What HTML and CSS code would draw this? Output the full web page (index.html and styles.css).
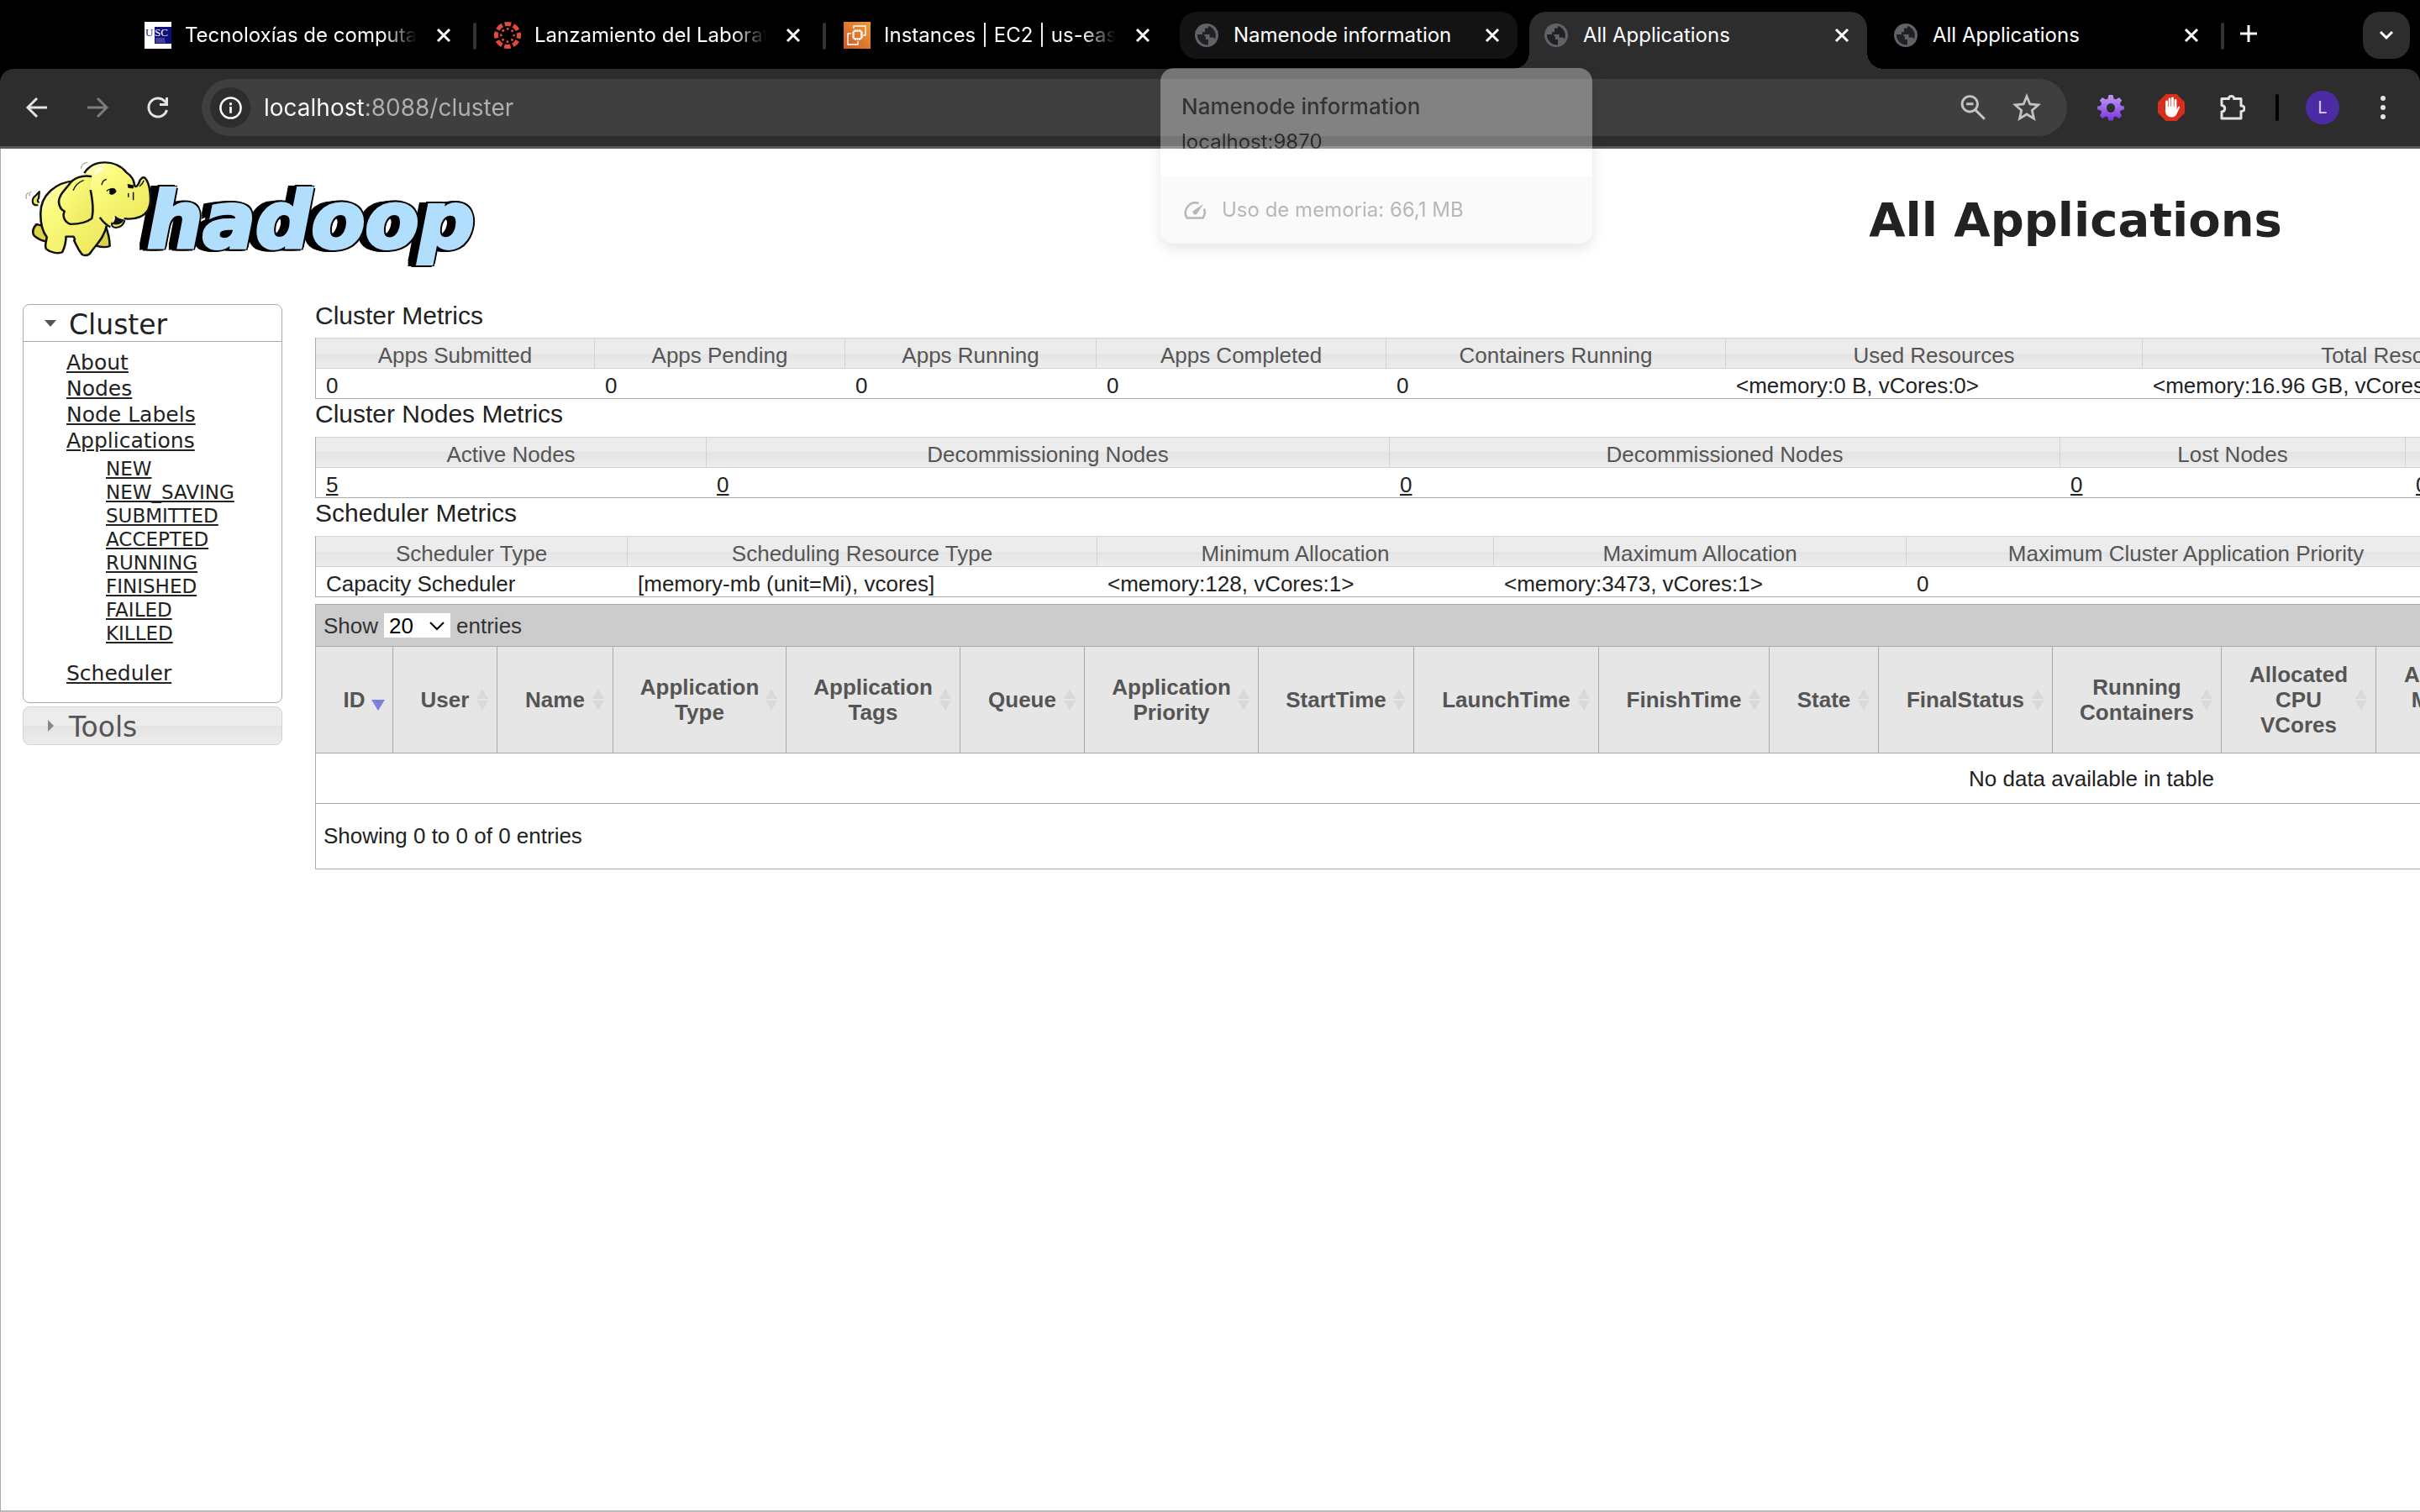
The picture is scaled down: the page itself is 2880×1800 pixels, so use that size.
FILE: index.html
```html
<!DOCTYPE html>
<html lang="es">
<head>
<meta charset="utf-8">
<title>All Applications</title>
<link rel="stylesheet" href="styles.css">
</head>
<body>
<svg class="defs" aria-hidden="true">
  <defs>
    <linearGradient id="gear-fill" x1="0" y1="0" x2="0" y2="1"><stop offset="0" stop-color="#c09af8"/><stop offset="1" stop-color="#7a35e0"/></linearGradient>
    <linearGradient id="aws-fill" x1="0" y1="1" x2="1" y2="0"><stop offset="0" stop-color="#c8592a"/><stop offset="1" stop-color="#f29b36"/></linearGradient>
    <linearGradient id="skin" x1="0" y1="0" x2="1" y2="1"><stop offset="0" stop-color="#fffdd0"/><stop offset=".3" stop-color="#fbfb7c"/><stop offset="1" stop-color="#eae65a"/></linearGradient>
    <symbol id="close" viewBox="0 0 18 18"><path d="M2 2l14 14M16 2L2 16" stroke="#fff" stroke-width="3" fill="none"/></symbol>
    <symbol id="globe" viewBox="0 0 28 28"><circle cx="14" cy="14" r="14" fill="#5f6368"/><path d="M3 13h6c2.200 0 4 1.800 4 4v2h3v6.500A12 12 0 0 1 3 13zM16 3v2.500h-4V10H9v3h8.500v3.500H21c1.500 0 2.500 1 3 2A11.500 11.500 0 0 0 16 3z" fill="#202124"/></symbol>
    <symbol id="sort" viewBox="0 0 16 26"><path d="M8 0l7 12H1zM8 26l7-12H1z" fill="#d9d9d9"/></symbol>
  </defs>
</svg>

<header class="browser">
  <div class="tabstrip">
    <div class="tabs" role="tablist">
      <div class="tab long" role="tab">
        <svg class="favicon" viewBox="0 0 32 32"><path fill="#fff" d="M0 0h32v32H0z"/><path fill="#10107a" d="M12 6h20v20H12z"/><text x="1" y="17" font-family="Liberation Serif" font-size="13" fill="#10107a">U</text><text x="12" y="17" font-family="Liberation Serif" font-size="13" fill="#fff">SC</text><path stroke="#7777b8" d="M13 20h11M13 22h11M13 24h12"/></svg>
        <span class="tab-title">Tecnoloxías de computación</span>
        <button class="tab-close" aria-label="Cerrar"><svg><use href="#close"/></svg></button>
      </div>
      <div class="tab long" role="tab">
        <svg class="favicon" viewBox="0 0 32 32"><circle cx="16" cy="16" r="13.500" fill="none" stroke="#e04c3c" stroke-width="5" stroke-dasharray="7.600 3" stroke-dashoffset="3.800"/><circle cx="16" cy="16" r="7.600" fill="none" stroke="#e04c3c" stroke-width="2.600" stroke-dasharray="2.600 3.370" stroke-dashoffset="1.300"/></svg>
        <span class="tab-title">Lanzamiento del Laboratorio</span>
        <button class="tab-close" aria-label="Cerrar"><svg><use href="#close"/></svg></button>
      </div>
      <div class="tab long" role="tab">
        <svg class="favicon" viewBox="0 0 32 32"><path fill="url(#aws-fill)" d="M0 0h32v32H0z"/><g fill="none" stroke="#fff" stroke-width="1.400"><path d="M12 11h9v9h-9zM14 11V9M16.500 11V9M19 11V9M14 22v-2M16.500 22v-2M19 22v-2M12 13h-2M12 15.500h-2M12 18h-2M21 13h2M21 15.500h2M21 18h2"/><path d="M12 8V5h14v11h-3M9 14H5v13h12v-4"/></g></svg>
        <span class="tab-title">Instances | EC2 | us-east-1</span>
        <button class="tab-close" aria-label="Cerrar"><svg><use href="#close"/></svg></button>
      </div>
      <div class="tab hovered" role="tab">
        <svg class="favicon small"><use href="#globe"/></svg>
        <span class="tab-title">Namenode information</span>
        <button class="tab-close" aria-label="Cerrar"><svg><use href="#close"/></svg></button>
      </div>
      <div class="tab active" role="tab" aria-selected="true">
        <svg class="favicon small"><use href="#globe"/></svg>
        <span class="tab-title">All Applications</span>
        <button class="tab-close" aria-label="Cerrar"><svg><use href="#close"/></svg></button>
      </div>
      <div class="tab" role="tab">
        <svg class="favicon small"><use href="#globe"/></svg>
        <span class="tab-title">All Applications</span>
        <button class="tab-close" aria-label="Cerrar"><svg><use href="#close"/></svg></button>
      </div>
    </div>
    <button class="new-tab" aria-label="Nueva pestaña"><svg viewBox="0 0 22 22"><path d="M11 1v20M1 11h20" stroke="#fff" stroke-width="3"/></svg></button>
    <button class="tab-search" aria-label="Buscar pestañas"><svg viewBox="0 0 18 12"><path d="M2 2l7 7 7-7" stroke="#fff" stroke-width="3" fill="none"/></svg></button>
  </div>

  <div class="toolbar">
    <button class="tool" aria-label="Atrás"><svg viewBox="0 0 32 32"><path d="M28 16H6M16 5L5 16l11 11" stroke="#e3e3e3" stroke-width="3" fill="none"/></svg></button>
    <button class="tool" aria-label="Adelante"><svg viewBox="0 0 32 32"><path d="M4 16h22M16 5l11 11-11 11" stroke="#7c7c7c" stroke-width="3" fill="none"/></svg></button>
    <button class="tool" aria-label="Recargar"><svg viewBox="0 0 32 32"><path d="M26.500 19A11 11 0 1 1 24 8.500l3 3" stroke="#e3e3e3" stroke-width="3" fill="none"/><path d="M28 4v10H18v-3h7V4z" fill="#e3e3e3"/></svg></button>
    <form class="omnibox">
      <button class="site-info" type="button" aria-label="Información del sitio"><svg viewBox="0 0 28 28"><circle cx="14" cy="14" r="12.500" stroke="#fff" stroke-width="2.600" fill="none"/><path d="M14 12.500v8M14 7.500v3" stroke="#fff" stroke-width="2.800"/></svg></button>
      <input class="url" type="text" aria-label="Dirección" value="localhost:8088/cluster">
      <button class="inner-tool" type="button" aria-label="Zoom"><svg viewBox="0 0 32 32"><circle cx="12.500" cy="12" r="8.600" stroke="#c4c4c4" stroke-width="2.800" fill="none"/><path d="M8.500 12h8M18.500 18.500L29 29" stroke="#c4c4c4" stroke-width="2.800"/></svg></button>
      <button class="inner-tool" type="button" aria-label="Marcador"><svg viewBox="0 0 32 32"><path d="M16 3.500l3.600 8.700 9.400.8-7.100 6.200 2.100 9.200L16 23.500l-8 4.900 2.100-9.200L3 13l9.400-.8z" stroke="#c4c4c4" stroke-width="2.600" fill="none"/></svg></button>
    </form>
    <button class="tool first" aria-label="Extensión"><svg viewBox="0 0 32 32"><g fill="url(#gear-fill)"><path fill-rule="evenodd" d="M13.500 1h5l1 4.500 2.500 1 4-2.500 3.200 3.500-2.400 3.800 1 2.500 4 .7v4l-4 1-1 2.500 2.400 3.800L26 29l-4-2.500-2.500 1-1 4h-5l-1-4-2.500-1L6 29l-3.200-3.200L5.200 22l-1-2.500-4-1v-4l4-.7 1-2.500L2.800 7.500 6 4l4 2.500 2.500-1zM16 11a5 5.500 0 1 0 0 11 5 5.500 0 1 0 0-11z"/></g></svg></button>
    <button class="tool" aria-label="AdBlock"><svg viewBox="0 0 32 32"><path d="M9.500 0h13L32 9.500v13L22.500 32h-13L0 22.500v-13z" fill="#d92d20"/><path d="M10.500 9v10M14 6v12M17.500 5v12M21 7.500v12" stroke="#fff" stroke-width="2.800" stroke-linecap="round"/><path d="M9.100 15h13.300v4l1.600-3.500c1-1.500 2.500-1 2 .7l-4 8.300c-1 2-3 3-5.500 3-4.500 0-7.400-3-7.400-7z" fill="#fff"/></svg></button>
    <button class="tool" aria-label="Extensiones"><svg viewBox="0 0 32 32"><path d="M4 5.500h8.500V4a3.500 3 0 0 1 6 0v1.500H27v8.500h1a3 3.200 0 0 1 0 6.500h-1V29H4v-8c5-.5 5-7 0-7.500z" stroke="#e3e3e3" stroke-width="3" stroke-linejoin="round" fill="none"/></svg></button>
    <span class="divider"></span>
    <button class="tool avatar-tool" aria-label="Perfil"><span class="avatar">L</span></button>
    <button class="tool" aria-label="Menú"><svg viewBox="0 0 32 32" fill="#e3e3e3"><circle cx="16" cy="5" r="3"/><circle cx="16" cy="16" r="3"/><circle cx="16" cy="27" r="3"/></svg></button>
  </div>

  <aside class="hovercard">
    <div class="hc-body">
      <div class="hc-title">Namenode information</div>
      <div class="hc-host">localhost:9870</div>
    </div>
    <div class="hc-foot">
      <svg viewBox="0 0 28 22"><path d="M18.500 3A12 12 0 0 0 4.500 20.500h19a12 12 0 0 0 1.500-11" fill="none" stroke="#333" stroke-width="2.500"/><path d="M24 4l-7.500 11.500a2.800 2.800 0 0 1-4.200-3.700z" fill="#333"/></svg>
      <span>Uso de memoria: 66,1 MB</span>
    </div>
  </aside>
</header>

<div class="page">
  <div class="page-head">
    <a class="logo" href="#" aria-label="hadoop">
      <svg class="elephant" viewBox="50 60 420 350" preserveAspectRatio="none" stroke="#111" stroke-width="7" stroke-linejoin="round">
        <path d="M97 222c-20 4-24-20-8-34l12-14-2 24c-6 6-4 14 2 14" fill="#e9e45a" stroke-width="6"/>
        <path d="M60 200q-6-14 6-22M70 190q-4-12 6-16M236 92q0-18 20-22" fill="none" stroke="#999" stroke-width="3"/>
        <path d="M92 290c-14 16-16 36-2 46 12 10 26 16 38 14l-6-50zM312 290c6 16 16 40 16 78-14 6-34 2-46-2l-6-60z" fill="#d9d345"/>
        <path d="M215 136c-60 4-112 50-110 120 0 30 6 60 20 80-2 20-8 30-2 42 14 14 40 18 52 12 8-18 12-38 12-56h24c4 8 6 12 2 14 8 18 12 32 26 50 12 6 22 2 28-8 14-24 44-50 52-100l-20-110z" fill="url(#skin)"/>
        <path d="M246 112c30-52 104-54 136-6 14 10 24 22 26 46 4 10 10 0 14-8 2-16 14-24 20-18 18 20 20 84 14 100-8 36-46 50-82 44-16-4-30-4-34-8 4 26-6 38-18 36-26-10-34-24-48-34l-30-80z" fill="url(#skin)" stroke="none"/>
        <path d="M246 108c30-52 104-48 136-2 14 10 24 22 26 46 4 10 10 0 14-8 2-16 14-24 20-18 18 20 20 84 14 100-8 36-46 50-82 44M330 300c-12-6-22-16-34-34" fill="none"/>
        <path d="M336 284c-4 14 4 18 12 18 14 0 26-10 28-26" fill="#e9e45a" stroke-width="6"/>
        <path d="M346 262c2 12-2 20-8 26 16 6 30-2 34-14-12-2-20-4-26-12z" fill="#111" stroke-width="3"/>
        <path d="M270 120c-30-6-60 4-74 30-16 22-34 40-32 64 2 16 10 26 18 30-8 20 2 40 20 46 28 0 54-8 68-20 8-34 2-70-4-102" fill="url(#skin)"/>
        <path d="M244 134c-16 6-28 20-34 36M302 150c2-10 6-18 16-20M318 172q16-16 30 2M404 176v28M388 180v14M424 156q10-8 14-22" fill="none" stroke-width="4"/>
        <path d="M328 166c14-8 20 0 20 8-4 10-14 12-20 8z" stroke-width="2"/>
        <path d="M386 148l18 4v10l-16-2z" stroke-width="2"/>
        <path d="M300 84c-14 8-24 20-20 30 20-10 30-20 20-30z" fill="#fffde0" stroke="none"/>
      </svg>
      <span class="wordmark">hadoop</span>
    </a>
    <h1 class="title">All Applications</h1>
  </div>

  <div class="columns">
    <nav class="sidebar">
      <section class="panel">
        <h3 class="panel-head"><svg class="caret" viewBox="0 0 14 14"><path d="M0 3h14l-7 8z" fill="#555"/></svg>Cluster</h3>
        <ul class="links">
          <li><a href="#">About</a></li>
          <li><a href="#">Nodes</a></li>
          <li><a href="#">Node Labels</a></li>
          <li><a href="#">Applications</a>
            <ul class="states">
              <li><a href="#">NEW</a></li>
              <li><a href="#">NEW_SAVING</a></li>
              <li><a href="#">SUBMITTED</a></li>
              <li><a href="#">ACCEPTED</a></li>
              <li><a href="#">RUNNING</a></li>
              <li><a href="#">FINISHED</a></li>
              <li><a href="#">FAILED</a></li>
              <li><a href="#">KILLED</a></li>
            </ul>
          </li>
          <li><a href="#">Scheduler</a></li>
        </ul>
      </section>
      <h3 class="panel-head collapsed"><svg class="caret" viewBox="0 0 14 14"><path d="M4 0v14l7-7z" fill="#888"/></svg>Tools</h3>
    </nav>

    <main class="content">
      <h2>Cluster Metrics</h2>
      <table class="metrics">
        <colgroup><col style="width:332px"><col style="width:298px"><col style="width:299px"><col style="width:345px"><col style="width:404px"><col style="width:496px"><col style="width:612px"><col></colgroup>
        <thead><tr><th>Apps Submitted</th><th>Apps Pending</th><th>Apps Running</th><th>Apps Completed</th><th>Containers Running</th><th>Used Resources</th><th>Total Resources</th><th></th></tr></thead>
        <tbody><tr><td>0</td><td>0</td><td>0</td><td>0</td><td>0</td><td>&lt;memory:0 B, vCores:0&gt;</td><td>&lt;memory:16.96 GB, vCores:10&gt;</td><td></td></tr></tbody>
      </table>
      <h2>Cluster Nodes Metrics</h2>
      <table class="metrics">
        <colgroup><col style="width:465px"><col style="width:813px"><col style="width:798px"><col style="width:411px"><col></colgroup>
        <thead><tr><th>Active Nodes</th><th>Decommissioning Nodes</th><th>Decommissioned Nodes</th><th>Lost Nodes</th><th></th></tr></thead>
        <tbody><tr><td><a href="#">5</a></td><td><a href="#">0</a></td><td><a href="#">0</a></td><td><a href="#">0</a></td><td><a href="#">0</a></td></tr></tbody>
      </table>
      <h2>Scheduler Metrics</h2>
      <table class="metrics">
        <colgroup><col style="width:371px"><col style="width:559px"><col style="width:472px"><col style="width:491px"><col style="width:666px"><col></colgroup>
        <thead><tr><th>Scheduler Type</th><th>Scheduling Resource Type</th><th>Minimum Allocation</th><th>Maximum Allocation</th><th>Maximum Cluster Application Priority</th><th></th></tr></thead>
        <tbody><tr><td>Capacity Scheduler</td><td>[memory-mb (unit=Mi), vcores]</td><td>&lt;memory:128, vCores:1&gt;</td><td>&lt;memory:3473, vCores:1&gt;</td><td>0</td><td></td></tr></tbody>
      </table>

      <div class="apps">
        <div class="apps-bar">
          <label for="page-size">Show</label>
          <span class="select-wrap"><select id="page-size"><option>20</option><option>40</option><option>60</option></select><svg viewBox="0 0 18 12"><path d="M1 2l8 8 8-8" fill="none" stroke="#000" stroke-width="2"/></svg></span>
          <span>entries</span>
        </div>
        <table class="apps-table">
          <colgroup><col style="width:92px"><col style="width:124px"><col style="width:138px"><col style="width:206px"><col style="width:207px"><col style="width:148px"><col style="width:207px"><col style="width:185px"><col style="width:220px"><col style="width:203px"><col style="width:130px"><col style="width:207px"><col style="width:201px"><col style="width:184px"><col style="width:184px"><col></colgroup>
          <thead><tr>
            <th class="sorted">ID<svg class="sort" viewBox="0 0 16 26"><path d="M0 13h16L8 26z" fill="#7b80dc"/></svg></th>
            <th>User<svg class="sort"><use href="#sort"/></svg></th>
            <th>Name<svg class="sort"><use href="#sort"/></svg></th>
            <th>Application<br>Type<svg class="sort"><use href="#sort"/></svg></th>
            <th>Application<br>Tags<svg class="sort"><use href="#sort"/></svg></th>
            <th>Queue<svg class="sort"><use href="#sort"/></svg></th>
            <th>Application<br>Priority<svg class="sort"><use href="#sort"/></svg></th>
            <th>StartTime<svg class="sort"><use href="#sort"/></svg></th>
            <th>LaunchTime<svg class="sort"><use href="#sort"/></svg></th>
            <th>FinishTime<svg class="sort"><use href="#sort"/></svg></th>
            <th>State<svg class="sort"><use href="#sort"/></svg></th>
            <th>FinalStatus<svg class="sort"><use href="#sort"/></svg></th>
            <th>Running<br>Containers<svg class="sort"><use href="#sort"/></svg></th>
            <th>Allocated<br>CPU<br>VCores<svg class="sort"><use href="#sort"/></svg></th>
            <th>Allocated<br>Memory<br>MB<svg class="sort"><use href="#sort"/></svg></th>
            <th></th>
          </tr></thead>
          <tbody><tr><td colspan="16">No data available in table</td></tr></tbody>
        </table>
        <div class="apps-foot">Showing 0 to 0 of 0 entries</div>
      </div>
    </main>
  </div>
</div>
</body>
</html>
```

FILE: styles.css
```css
* { box-sizing: border-box; }

body {
  margin: 0;
  min-height: 100vh;
  display: flex;
  flex-direction: column;
  overflow: hidden;
  background: #fff;
  color: #222;
  font: 26px/30px "Liberation Sans", Arial, sans-serif;
}

.defs { position: absolute; width: 0; height: 0; }
button { border: 0; padding: 0; background: none; display: grid; place-items: center; font: inherit; flex: none; }
a { color: inherit; }

/* Browser chrome */
.browser {
  position: relative;
  background: #000;
  color: #fff;
  font-family: Inter, sans-serif;
}

.tabstrip { display: flex; align-items: flex-end; height: 82px; padding: 0 12px 0 156px; }
.tabs { display: flex; gap: 14px; flex: 0 1 2482px; }
.tab {
  position: relative;
  display: flex;
  align-items: center;
  flex: 1 1 0;
  min-width: 0;
  height: 56px;
  margin-bottom: 12px;
  padding: 0 20px 0 16px;
  border-radius: 20px;
  font-size: 24px;
}
.tab:nth-child(-n+2)::after, .tab:last-child::after {
  content: "";
  position: absolute;
  right: -9px;
  top: 13px;
  width: 4px;
  height: 32px;
  border-radius: 2px;
  background: #333;
}
.tab.hovered { background: #131313; }
.tab.active {
  height: 68px;
  margin-bottom: 0;
  padding-bottom: 12px;
  background: #2d2d2d;
  border-radius: 20px 20px 0 0;
}
.tab.active::before, .tab.active::after {
  content: "";
  position: absolute;
  bottom: 0;
  width: 20px;
  height: 20px;
}
.tab.active::before { left: -20px; background: radial-gradient(circle at 0 0, transparent 20px, #2d2d2d 20px); }
.tab.active::after { right: -20px; background: radial-gradient(circle at 100% 0, transparent 20px, #2d2d2d 20px); }
.favicon { width: 32px; height: 32px; flex: none; }
.favicon.small { width: 28px; height: 28px; margin: 0 2px; }
.tab-title {
  flex: 1;
  margin: 0 22px 0 16px;
  overflow: hidden;
  white-space: nowrap;
}
.long .tab-title { mask-image: linear-gradient(90deg, #000 calc(100% - 40px), transparent); }
.tab-close { width: 20px; height: 20px; }
.tab-close svg { width: 18px; height: 18px; }
.new-tab { width: 56px; height: 56px; margin: 0 0 14px 10px; }
.new-tab svg { width: 22px; height: 22px; }
.tab-search { width: 56px; height: 56px; margin: 0 0 12px auto; border-radius: 20px; background: #2d2d2d; }
.tab-search svg { width: 18px; height: 12px; }

.toolbar {
  display: flex;
  align-items: center;
  height: 95px;
  padding: 0 8px;
  background: #2d2d2d;
  border-bottom: 3px solid #5a5a5a;
  border-radius: 16px 16px 0 0;
}
.tool { width: 72px; height: 72px; }
.tool svg { width: 32px; height: 32px; }
.tool.first { margin-left: 16px; }
.omnibox {
  flex: 1;
  display: flex;
  align-items: center;
  height: 68px;
  margin-left: 16px;
  padding: 0 16px 0 10px;
  border-radius: 34px;
  background: #3f3f3f;
}
.site-info { width: 48px; height: 48px; border-radius: 50%; background: #2d2d2d; }
.site-info svg { width: 27px; height: 27px; }
.url {
  flex: 1;
  min-width: 0;
  margin-left: 16px;
  padding: 0;
  border: 0;
  outline: 0;
  font: 28px/40px Inter, sans-serif;
  color: transparent;
  background: linear-gradient(90deg, #fff 120px, #b0b0b0 120px);
  background-clip: text;
}
.inner-tool { width: 64px; height: 64px; }
.inner-tool svg { width: 34px; height: 34px; }
.divider { width: 4px; height: 32px; margin: 0 16px; border-radius: 2px; background: #000; }
.avatar { width: 40px; height: 40px; border-radius: 50%; background: #4b2ca5; color: #d9d0f5; font-size: 20px; line-height: 40px; text-align: center; }

/* Tab hover card, fading in over the toolbar and the page */
.hovercard {
  position: absolute;
  left: 1381px;
  top: 81px;
  width: 514px;
  border-radius: 16px;
  overflow: hidden;
  background: #fff;
  color: #1f1f1f;
  opacity: .35;
  box-shadow: 0 6px 16px rgba(0, 0, 0, .3);
  font-size: 24px;
}
.hc-body { height: 129px; padding: 28px 25px 0; }
.hc-title { font-size: 26px; font-weight: 500; line-height: 36px; }
.hc-host { line-height: 36px; margin-top: 6px; }
.hc-foot { display: flex; align-items: center; gap: 18px; height: 80px; padding: 0 27px; background: #f3f3f3; color: #333; }
.hc-foot svg { width: 28px; height: 22px; }

/* Hadoop page */
.page { flex: 1; border-left: 1px solid #aaa; border-bottom: 2px solid #bbb; overflow: hidden; }
.page-head { display: flex; height: 185px; }
.logo { flex: 0 0 336px; min-width: 0; display: flex; align-items: flex-start; padding: 13px 0 0 27px; text-decoration: none; white-space: nowrap; }
.elephant { position: relative; z-index: 1; width: 155px; height: 117px; flex: none; }
.wordmark {
  margin: 13px 0 0 -8px;
  font: italic bold 93px/120px "DejaVu Sans", Verdana, sans-serif;
  color: #b1defc;
  -webkit-text-stroke: 4px #b1defc;
  text-shadow: 4px 0 #000, 3px 3px #000, 3px -3px #000, 0 4px #000, 0 -4px #000, -4px 0 #000, -4px 4px #000, -4px -4px #000, -8px 4px #000, -8px -3px #000, -12px 3px #000, -12px -3px #000, -12px 0 #000;
}
.title { flex: 0 0 4266px; margin: 0; padding-top: 53px; font: bold 56px/64px "DejaVu Sans", Verdana, sans-serif; text-align: center; }
.columns { display: flex; gap: 39px; padding-left: 26px; }

.sidebar { flex: 0 0 309px; font: 25px/31px "DejaVu Sans", Verdana, sans-serif; }
.panel { border: 1px solid #aaa; border-radius: 8px; height: 475px; }
.panel-head {
  display: flex;
  align-items: center;
  height: 44px;
  margin: 0;
  padding: 4px 0 0 25px;
  gap: 15px;
  border-bottom: 1px solid #aaa;
  font-size: 33px;
  font-weight: normal;
  line-height: 40px;
}
.panel-head.collapsed {
  height: 46px;
  margin-top: 4px;
  border: 1px solid #d3d3d3;
  border-radius: 8px;
  color: #555;
  background: linear-gradient(#ececec 50%, #e4e4e4 50%, #ececec);
}
.caret { width: 14px; height: 14px; margin-bottom: 4px; }
.links, .states { list-style: none; margin: 0; padding: 0; }
.links { padding: 9px 0 0 51px; }
.states { padding: 4px 0 18px 47px; font-size: 23px; line-height: 28px; }

.content { flex: 0 0 4228px; }
h2 { margin: 0; height: 45px; padding-top: 4px; font-size: 30px; font-weight: normal; line-height: 28px; }
.content h2:first-child { height: 40px; padding-top: 0; }
table { width: 100%; table-layout: fixed; border-collapse: separate; border-spacing: 0; white-space: nowrap; }
th, td { padding: 0; }
.metrics { border: 1px solid #aaa; border-top: 0; }
.metrics th {
  height: 37px;
  padding-top: 6px;
  border: solid #d3d3d3;
  border-width: 1px 1px 1px 0;
  background: linear-gradient(#ececec 50%, #e4e4e4 50%, #ececec);
  color: #555;
  font-weight: normal;
  line-height: 29px;
}
.metrics td { height: 35px; padding: 6px 12px 0; line-height: 29px; }

.apps { margin-top: 8px; border: 1px solid #aaa; }
.apps-bar { display: flex; align-items: center; gap: 7px; height: 49px; padding-left: 9px; background: #ccc; color: #333; }
.select-wrap { position: relative; display: flex; }
.select-wrap select { width: 79px; height: 29px; padding: 0 6px; border: 0; border-radius: 0; appearance: none; background: #fff; color: #000; font: inherit; }
.select-wrap svg { position: absolute; right: 7px; top: 9px; width: 18px; height: 12px; pointer-events: none; }
.apps-table th {
  position: relative;
  height: 128px;
  border: solid #aaa;
  border-width: 1px 1px 1px 0;
  background: #e6e6e6;
  color: #555;
}
.apps-table td { height: 60px; border-bottom: 1px solid #aaa; text-align: center; }
.sort { position: absolute; right: 9px; top: 50px; width: 16px; height: 26px; }
.apps-foot { height: 77px; padding: 23px 9px; }
```
